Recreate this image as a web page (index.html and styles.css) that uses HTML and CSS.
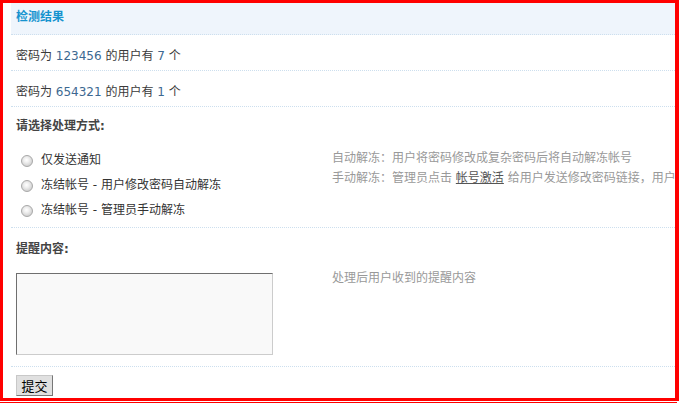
FILE: index.html
```html
<!DOCTYPE html>
<html lang="zh-CN">
<head>
<meta charset="utf-8">
<title>检测结果</title>
<link rel="stylesheet" href="styles.css">
</head>
<body>
<div class="frame">
  <div class="panel">
    <div class="row head">检测结果</div>
    <div class="row line">密码为 <span class="num">123456</span> 的用户有 <span class="num">7</span> 个</div>
    <div class="row line">密码为 <span class="num">654321</span> 的用户有 <span class="num">1</span> 个</div>
    <div class="row section sec1">
      <div class="label">请选择处理方式:</div>
      <div class="cols cols1">
        <div class="left">
          <div class="opt"><span class="radio"></span>仅发送通知</div>
          <div class="opt"><span class="radio"></span>冻结帐号 - 用户修改密码自动解冻</div>
          <div class="opt"><span class="radio"></span>冻结帐号 - 管理员手动解冻</div>
        </div>
        <div class="right">
          <div class="tip">自动解冻：用户将密码修改成复杂密码后将自动解冻帐号</div>
          <div class="tip">手动解冻：管理员点击 <a class="lnk" href="#">帐号激活</a> 给用户发送修改密码链接，用户登录后修改密码即可解冻</div>
        </div>
      </div>
    </div>
    <div class="row section sec2">
      <div class="label">提醒内容:</div>
      <div class="cols cols2">
        <div class="left"><textarea class="msg"></textarea></div>
        <div class="right"><div class="tip">处理后用户收到的提醒内容</div></div>
      </div>
    </div>
    <div class="row foot"><button class="btn" type="button">提交</button></div>
  </div>
</div>
<div class="underline"></div>
</body>
</html>
```
FILE: styles.css
```css
html, body {
  margin: 0;
  padding: 0;
  background: #fff;
}
body {
  font: 12px/18px "DejaVu Sans", "Noto Sans CJK SC", sans-serif;
  color: #444;
  width: 679px;
  height: 403px;
  overflow: hidden;
}
.frame {
  box-sizing: border-box;
  width: 679px;
  height: 401px;
  border: 3px solid #ff0000;
  border-right-width: 4px;
  padding-left: 8px;
  overflow: hidden;
}
.underline {
  margin-top: 1px;
  width: 677px;
  height: 1px;
  background: #ff0000;
}
.panel {
  width: 100%;
}
.row {
  border-bottom: 1px dotted #cddfee;
  padding-left: 5px;
  white-space: nowrap;
}
.head {
  height: 31px;
  line-height: 29px;
  background: #eff5fc;
  color: #1593cf;
  font-weight: bold;
}
.line {
  box-sizing: border-box;
  height: 36px;
  padding-top: 3px;
  line-height: 36px;
  color: #3a3a3a;
}
.num {
  color: #3d6891;
}
.section {
  padding-left: 0;
}
.label {
  padding-left: 5px;
  font-weight: bold;
  color: #444;
  height: 18px;
  line-height: 18px;
}
.sec1 {
  height: 121px;
  box-sizing: border-box;
  padding-top: 10px;
}
.cols {
  display: flex;
}
.cols1 {
  margin-top: 13px;
}
.left {
  width: 321px;
  flex: none;
}
.right {
  flex: none;
  color: #999;
}
.tip {
  line-height: 20px;
  height: 20px;
}
.opt {
  height: 25px;
  line-height: 25px;
  padding-left: 10px;
  display: flex;
  align-items: center;
  color: #333;
}
.radio {
  box-sizing: border-box;
  width: 12px;
  height: 12px;
  border-radius: 50%;
  border: 1px solid #a8a8a8;
  background: radial-gradient(circle at 45% 40%, #ffffff 0%, #f0f0f0 30%, #c9c9c9 85%);
  margin-right: 8px;
  flex: none;
}
.lnk {
  color: #555;
  text-decoration: underline;
}
.sec2 {
  height: 139px;
  box-sizing: border-box;
  padding-top: 12px;
}
.cols2 {
  margin-top: 10px;
}
.cols2 .left {
  padding-left: 5px;
  box-sizing: border-box;
}
.msg {
  display: block;
  box-sizing: border-box;
  margin: 5px 0 0 0;
  width: 257px;
  height: 82px;
  border: 1px solid;
  border-color: #6f6f6f #cccccc #cccccc #6f6f6f;
  background: #f9f9f9;
  resize: none;
  padding: 2px;
}
.foot {
  border-bottom: none;
  height: 30px;
  box-sizing: border-box;
  padding-top: 8px;
}
.btn {
  display: block;
  box-sizing: border-box;
  width: 37px;
  height: 21px;
  padding: 0;
  margin: 0;
  font: 13px/19px "Noto Sans CJK SC", sans-serif;
  color: #000;
  background: #e0e0e0;
  border: 1px solid;
  border-color: #c8c8c8 #777 #777 #c8c8c8;
}
```
